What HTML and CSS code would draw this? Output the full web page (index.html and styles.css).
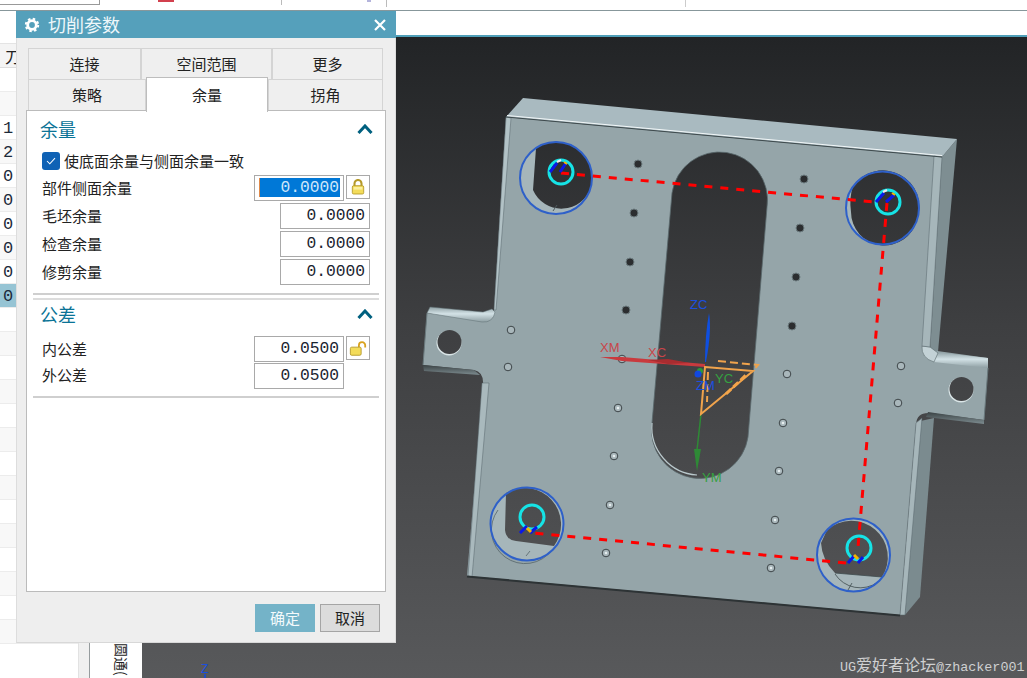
FILE: index.html
```html
<!DOCTYPE html>
<html lang="zh">
<head>
<meta charset="utf-8">
<title>切削参数</title>
<link rel="stylesheet" href="styles.css">
</head>
<body>
<div class="topstrip">
  <div class="topbox"></div>
  <i class="mark mark-a"></i><i class="mark mark-b"></i><i class="mark mark-c"></i><i class="mark mark-d"></i><i class="mark mark-e"></i>
</div>
<div class="workspace">
  <aside class="leftpanel">
    <div class="table">
      <div class="table-gap"></div>
      <div class="table-head">刀具</div>
      <div class="row"></div>
      <div class="row"></div>
      <div class="row">1</div>
      <div class="row">2</div>
      <div class="row">0</div>
      <div class="row">0</div>
      <div class="row">0</div>
      <div class="row">0</div>
      <div class="row">0</div>
      <div class="row selected">0</div>
      <div class="row"></div><div class="row"></div><div class="row"></div><div class="row"></div>
      <div class="row"></div><div class="row"></div><div class="row"></div><div class="row"></div>
      <div class="row"></div><div class="row"></div><div class="row"></div><div class="row"></div>
      <div class="row"></div><div class="row"></div>
    </div>
    <div class="gutter"></div>
    <div class="sidetab"><span class="sidetext">圆通(</span></div>
  </aside>
  <main class="mainarea">
    <div class="whitebar"></div>
    <svg class="viewport" viewBox="142 37 885 641" width="885" height="641" xmlns="http://www.w3.org/2000/svg">
      <defs>
        <linearGradient id="bg" gradientUnits="userSpaceOnUse" x1="0" y1="37" x2="0" y2="678">
          <stop offset="0" stop-color="#222426"/>
          <stop offset="0.45" stop-color="#3e3f41"/>
          <stop offset="1" stop-color="#58595b"/>
        </linearGradient>
        <linearGradient id="band" x1="0" y1="0" x2="0" y2="1">
          <stop offset="0" stop-color="#8fa0a4"/>
          <stop offset="0.45" stop-color="#d3e2e6"/>
          <stop offset="1" stop-color="#8d9ea2"/>
        </linearGradient>
        <linearGradient id="darkband" x1="0" y1="0" x2="0" y2="1">
          <stop offset="0" stop-color="#3a4244"/>
          <stop offset="1" stop-color="#7d8c90"/>
        </linearGradient>
      </defs>
      <rect x="142" y="37" width="885" height="641" fill="url(#bg)"/>

      <polygon points="942,157 957,139 938,352 930,350" fill="#7e8e92"/>
      <polygon points="934,418 920,597 905,615 916,422" fill="#7b8b8f"/>
      <polygon points="506,117 523,98 957,139 942,157" fill="#a9bac0"/>
      <path class="face" d="M506,117 L942,157 L930,350 L988,358 L988,368 L984,420 L930,413 Q917,412 916,424 L900,615 L467,576 L483,385 Q484,372 474,370 L423,365 L427,313 L484,320 Q494,322 494,310 Z"/>

      <path d="M430,307 L483,312 L492,309 L495,312 Q493,323 482,322 L427,313 Z" fill="url(#band)" stroke="#5f6e72" stroke-width=".5"/>
      <polygon points="934,352 988,358 988,368 934,362" fill="url(#band)"/>
      <path d="M922,346 Q921,358 934,362 L938,353 L930,347 Z" fill="#c3d2d6" stroke="#59686c" stroke-width=".6"/>
      <polygon points="423,365 474,370 480,375 424,371" fill="url(#darkband)"/>
      <polygon points="928,412 984,420 984,424 926,417" fill="url(#darkband)"/>

      <polygon points="506,117 511,118 496,310 494,310" fill="#b2c2c6" stroke="#56656a" stroke-width=".5"/>
      <polygon points="934,156 942,157 930,347 922,346" fill="#a6b6ba" stroke="#56656a" stroke-width=".5"/>
      <polygon points="482,383 489,383 472,577 468,576" fill="#a9b9bd" stroke="#56656a" stroke-width=".5"/>
      <polygon points="916,423 922,418 905,615 900,615" fill="#a6b6ba" stroke="#56656a" stroke-width=".5"/>
      <line x1="507" y1="115.500" x2="942" y2="155.500" stroke="#f2f7f8" stroke-width="1"/>
      <line x1="506" y1="117" x2="942" y2="157" stroke="#3f4b4e" stroke-width="1"/>
      <line x1="467" y1="576.500" x2="900" y2="615.500" stroke="#2d3335" stroke-width="2"/>
      <path d="M423,365 L427,313 M988,368 L984,420" stroke="#6a797d" stroke-width="1" fill="none"/>

      <path d="M672,193 A48 48 0 0 1 767,207 L748,437 A48 48 0 0 1 652,423 Z" fill="url(#bg)" stroke="#59686c" stroke-width=".8"/>
      <path d="M652,423 A48 48 0 0 0 697,475" fill="none" stroke="#b9c8cc" stroke-width="1.200"/>

      <circle cx="449" cy="343" r="12.500" fill="#dbe6e8"/>
      <circle cx="449.500" cy="342" r="12" fill="url(#bg)"/>
      <circle cx="961" cy="390" r="12.500" fill="#dbe6e8"/>
      <circle cx="961.500" cy="389" r="12" fill="url(#bg)"/>

      <g fill="#2b2d2f" stroke="#6c7b7f" stroke-width="1">
        <circle cx="638" cy="164" r="4"/><circle cx="804" cy="179" r="4"/>
        <circle cx="634" cy="213" r="4"/><circle cx="800" cy="228" r="4"/>
        <circle cx="630" cy="262" r="4"/><circle cx="796" cy="277" r="4"/>
        <circle cx="626" cy="310" r="4"/><circle cx="792" cy="326" r="4"/>
      </g>
      <g fill="#a9b7bb" stroke="#3d4548" stroke-width="1">
        <circle cx="511" cy="330" r="3.800"/><circle cx="508" cy="367" r="3.800"/>
        <circle cx="622" cy="359" r="3.800"/><circle cx="787" cy="374" r="3.800"/>
        <circle cx="618" cy="408" r="3.800"/><circle cx="783" cy="423" r="3.800"/>
        <circle cx="614" cy="456" r="3.800"/><circle cx="779" cy="471" r="3.800"/>
        <circle cx="610" cy="505" r="3.800"/><circle cx="775" cy="520" r="3.800"/>
        <circle cx="606" cy="553" r="3.800"/><circle cx="771" cy="568" r="3.800"/>
        <circle cx="901" cy="366" r="3.800"/><circle cx="898" cy="403" r="3.800"/>
      </g>
      <g fill="#e6edef">
        <circle cx="618" cy="408" r="1.300"/><circle cx="783" cy="423" r="1.300"/>
        <circle cx="614" cy="456" r="1.300"/><circle cx="779" cy="471" r="1.300"/>
        <circle cx="610" cy="505" r="1.300"/><circle cx="775" cy="520" r="1.300"/>
        <circle cx="606" cy="553" r="1.300"/><circle cx="771" cy="568" r="1.300"/>
      </g>

      <!-- counterbores -->
      <circle cx="556" cy="178" r="36" fill="#a6b6ba"/>
      <path d="M536,148 A36 36 0 0 1 591,187 A31 31 0 0 1 533,190 Z" fill="url(#bg)"/>
      <path d="M553,211 L557,205" stroke="#4d5a5e" stroke-width="1"/>
      <circle class="bore" cx="556" cy="178" r="36"/>

      <circle cx="882.500" cy="208" r="36.500" fill="#a6b6ba"/>
      <path d="M853,186 A36.500 36.500 0 0 1 917,220 A33.500 33.500 0 0 1 851,212 Q849,198 853,186 Z" fill="url(#bg)"/>
      <circle class="bore" cx="882.500" cy="208" r="36.500"/>

      <circle cx="527" cy="524" r="36.500" fill="#a6b6ba"/>
      <path d="M506,493 A36.500 36.500 0 0 1 554,546 L516,541 Q506,540 505,530 Z" fill="url(#bg)"/>
      <path d="M498,510 A32 32 0 0 0 552,550 M526,556 L530,551" fill="none" stroke="#56656a" stroke-width=".8"/>
      <circle class="bore" cx="527" cy="524" r="36.500"/>

      <circle cx="853.500" cy="555" r="36.500" fill="#a6b6ba"/>
      <path d="M827,530 A36.500 36.500 0 0 1 882,577 L835,573 Q822,560 821,543 Z" fill="url(#bg)"/>
      <path d="M835,573 L882,577 M848,590 L852,583 M835,574 A30 30 0 0 0 878,582" fill="none" stroke="#3f4b4e" stroke-width=".8"/>
      <circle class="bore" cx="853.500" cy="555" r="36.500"/>

      <!-- tool path -->
      <path class="toolpath" d="M561,173 L874,202"/>
      <path class="toolpath" d="M887,203 L858,547"/>
      <path class="toolpath" d="M846,563 L534,533"/>

      <circle class="cyan" cx="561" cy="172" r="12"/>
      <circle class="cyan" cx="888" cy="202" r="12"/>
      <circle class="cyan" cx="532" cy="517" r="12"/>
      <circle class="cyan" cx="859" cy="548" r="12"/>

      <path class="tick" d="M550,172 L557,163 M560,172 L566,163"/>
      <path class="tick" d="M876,202 L884,193 M886,202 L894,195"/>
      <path class="tick" d="M520,533 L527,526 M530,533 L537,527"/>
      <path class="tick" d="M848,563 L854,556 M858,563 L863,557"/>
      <path d="M557,162 L561,160 M883,192 L887,190" stroke="#f3e4ef" stroke-width="2"/>
      <path d="M564,162 L567,164 M892,193 L895,195" stroke="#f4b400" stroke-width="2"/>
      <path d="M527,528 L531,532 M854,555 L858,559" stroke="#f4b400" stroke-width="3"/>

      <!-- triad -->
      <polygon points="600,357 622,357 705,364 705,367 622,361" fill="#c93a3e"/>
      <polygon points="648,360 668,359 690,363 668,364" fill="#a82c30"/>
      <path d="M709,313 Q712,330 706,362 L705,362 Q705,335 709,313 Z" fill="#0f4fe0"/>
      <line x1="701" y1="414" x2="697" y2="450" stroke="#2e8a36" stroke-width="1.500"/>
      <polygon points="694,449 701,449 697,471" fill="#2e8a36"/>
      <circle cx="700" cy="371" r="3" fill="#2a9b3a"/>
      <circle cx="698" cy="374" r="3.500" fill="#1248e0"/>
      <polygon class="orange" points="705,367 753,371 701,414"/>
      <path class="orange dashed" d="M718,361 L758,365 L753,371 M708,372 L707,402"/>
      <path d="M726,394 L746,375" stroke="#f3a54a" stroke-width="3" stroke-dasharray="7 3"/>

      <text class="axis red" x="600" y="352">XM</text>
      <text class="axis red" x="648" y="357">XC</text>
      <text class="axis blue" x="690" y="309">ZC</text>
      <text class="axis green" x="715" y="383">YC</text>
      <text class="axis blue" x="696" y="390">ZM</text>
      <text class="axis green" x="702" y="482">YM</text>

      <text class="axis blue small" x="201" y="673">Z</text>
      <line x1="205" y1="674" x2="205" y2="678" stroke="#1248e0" stroke-width="1.500"/>

      <text class="watermark" x="840" y="671">UG<tspan class="cjk">爱好者论坛</tspan>@zhacker001</text>
    </svg>
  </main>
</div>

<section class="dialog">
  <header class="titlebar">
    <svg class="gear" viewBox="0 0 16 16" width="16" height="16" xmlns="http://www.w3.org/2000/svg">
      <circle cx="8" cy="8" r="4.300" fill="none" stroke="#fff" stroke-width="2.800"/>
      <circle cx="8" cy="8" r="6.200" fill="none" stroke="#fff" stroke-width="2" stroke-dasharray="2.500 2.370"/>
    </svg>
    <span class="title">切削参数</span>
    <svg class="close" viewBox="0 0 12 12" width="12" height="12" xmlns="http://www.w3.org/2000/svg">
      <path d="M1 1 L11 11 M11 1 L1 11" stroke="#fff" stroke-width="2.200"/>
    </svg>
  </header>
  <div class="tabs">
    <div class="tabrow tabrow-top">
      <div class="tab tab-a">连接</div>
      <div class="tab tab-b">空间范围</div>
      <div class="tab tab-c">更多</div>
    </div>
    <div class="tabrow tabrow-bottom">
      <div class="tab tab-d">策略</div>
      <div class="tab tab-e active">余量</div>
      <div class="tab tab-f">拐角</div>
    </div>
  </div>
  <div class="panel">
    <div class="section-head first">
      <span>余量</span>
      <svg viewBox="0 0 16 10" width="16" height="10" xmlns="http://www.w3.org/2000/svg"><path d="M1.500 9 L8 2 L14.500 9" fill="none" stroke="#00607f" stroke-width="3"/></svg>
    </div>
    <label class="check">
      <span class="box"><svg viewBox="0 0 12 10" width="10" height="8" xmlns="http://www.w3.org/2000/svg"><path d="M1 5 L4.500 8.500 L11 1.500" fill="none" stroke="#fff" stroke-width="1.300"/></svg></span>
      <span class="checktext">使底面余量与侧面余量一致</span>
    </label>
    <div class="fields">
      <div class="field">
        <span class="flabel">部件侧面余量</span>
        <div class="input focus"><span class="sel">0.0000</span></div>
        <div class="lockbtn">
          <svg viewBox="0 0 16 18" width="14" height="16" xmlns="http://www.w3.org/2000/svg">
            <path d="M4 8 V5 A4 4 0 0 1 12 5 V8" fill="none" stroke="#b59a2a" stroke-width="2.400"/>
            <rect x="1.500" y="7.500" width="13" height="9.500" rx="1.500" fill="#f3dc5a" stroke="#b59a2a"/>
            <rect x="3" y="9" width="10" height="3" fill="#fbf0a0"/>
          </svg>
        </div>
      </div>
      <div class="field"><span class="flabel">毛坯余量</span><div class="input">0.0000</div></div>
      <div class="field"><span class="flabel">检查余量</span><div class="input">0.0000</div></div>
      <div class="field"><span class="flabel">修剪余量</span><div class="input">0.0000</div></div>
    </div>
    <div class="rule rule-a"></div>
    <div class="rule rule-b"></div>
    <div class="section-head">
      <span>公差</span>
      <svg viewBox="0 0 16 10" width="16" height="10" xmlns="http://www.w3.org/2000/svg"><path d="M1.500 9 L8 2 L14.500 9" fill="none" stroke="#00607f" stroke-width="3"/></svg>
    </div>
    <div class="fields fields-tight">
      <div class="field">
        <span class="flabel">内公差</span>
        <div class="input">0.0500</div>
        <div class="lockbtn">
          <svg viewBox="0 0 20 16" width="18" height="15" xmlns="http://www.w3.org/2000/svg">
            <path d="M11 7 V4.500 A3.500 3.500 0 0 1 18 4.500 V7" fill="none" stroke="#d9a21f" stroke-width="2"/>
            <rect x="1.500" y="6.500" width="12" height="9" rx="1.500" fill="#f3dc5a" stroke="#b59a2a"/>
          </svg>
        </div>
      </div>
      <div class="field spaced"><span class="flabel flabel-up">外公差</span><div class="input">0.0500</div></div>
    </div>
    <div class="rule rule-c"></div>
  </div>
  <footer class="footer">
    <button class="btn primary">确定</button>
    <button class="btn">取消</button>
  </footer>
</section>
</body>
</html>
```
FILE: styles.css
```css
* { box-sizing: border-box; }
html, body { margin: 0; padding: 0; }
body {
  width: 1027px;
  height: 678px;
  overflow: hidden;
  position: relative;
  background: #fff;
  font-family: "Noto Sans CJK SC", "Liberation Sans", sans-serif;
  font-size: 15px;
  color: #222;
}

/* top strip */
.topstrip {
  height: 11px;
  border-bottom: 1px solid #87979b;
  position: relative;
  background: #fff;
}
.topbox {
  width: 100px;
  height: 5px;
  border-right: 1px solid #999;
  border-bottom: 1px solid #999;
}
.mark { position: absolute; top: 0; display: block; }
.mark-a { left: 158px; width: 16px; height: 2px; background: #d2404e; }
.mark-b { left: 281px; width: 1px; height: 5px; background: #bbb; }
.mark-c { left: 386px; width: 1px; height: 7px; background: #bbb; }
.mark-d { left: 685px; width: 1px; height: 7px; background: #ccc; }
.mark-e { left: 367px; width: 4px; height: 2px; background: #b4b4dc; }

.workspace { display: flex; height: 667px; }

/* left panel */
.leftpanel { width: 142px; display: flex; flex: none; overflow: hidden; }
.table { width: 78px; flex: none; }
.table-gap { height: 32px; }
.table-head {
  height: 25px;
  padding-left: 5px;
  line-height: 24px;
  background: #f4f4f4;
  border-top: 1px solid #e4e4e4;
  border-bottom: 1px solid #ddd;
  white-space: nowrap;
  font-size: 16px;
}
.row {
  height: 24px;
  padding-left: 3px;
  border-bottom: 1px solid #ececec;
  font-family: "Liberation Mono", monospace;
  font-size: 17px;
  line-height: 26px;
  color: #1c2a3a;
}
.table .row:nth-of-type(odd) { background: #fff; }
.table .row:nth-of-type(even) { background: #f8f8f8; }
.table .row.selected { background: #96c4d4; }
.gutter {
  width: 12px;
  flex: none;
  background: #f0f0f0;
  border-left: 1px solid #e2e2e2;
  border-right: 1px solid #969c9e;
}
.sidetab { flex: 1; background: #fff; padding-top: 632px; padding-left: 25px; }
.sidetext {
  display: block;
  writing-mode: vertical-rl;
  text-orientation: sideways;
  white-space: nowrap;
  font-size: 14px;
  line-height: 14px;
}

/* main area */
.mainarea { flex: 1; display: flex; flex-direction: column; min-width: 0; }
.whitebar {
  height: 26px;
  background: #fff;
  border-bottom: 2px solid #4f9fb8;
  flex: none;
}
.viewport { display: block; flex: none; }
.face { fill: #95a5a9; }
.bore { fill: none; stroke: #2e60c9; stroke-width: 2; }
.toolpath { fill: none; stroke: #f00; stroke-width: 3; stroke-dasharray: 8 8; }
.cyan { fill: none; stroke: #16e3e6; stroke-width: 3; }
.tick { fill: none; stroke: #0a18e8; stroke-width: 3; }
.orange { fill: none; stroke: #f0a34c; stroke-width: 2; }
.dashed { stroke-dasharray: 8 4; }
.axis { font-family: "Liberation Sans", sans-serif; font-size: 13px; }
.axis.small { font-size: 12px; }
.red { fill: #c9454a; }
.blue { fill: #1a4fe0; }
.green { fill: #35a040; }
.watermark {
  font-family: "Liberation Mono", monospace;
  font-size: 13.400px;
  fill: #cfd0d1;
}
.watermark .cjk { font-family: "Noto Sans CJK SC", sans-serif; font-size: 16px; }

/* dialog */
.dialog {
  position: absolute;
  left: 16px;
  top: 11px;
  width: 380px;
  height: 632px;
  background: #eee;
  border-left: 1px solid #ddd;
  border-right: 1px solid #ddd;
  border-bottom: 1px solid #d8d8d8;
  display: flex;
  flex-direction: column;
}
.titlebar {
  height: 27px;
  flex: none;
  margin: 0 -1px;
  background: #55a0bb;
  color: #fff;
  display: flex;
  align-items: center;
  padding: 0 10px 0 8px;
}
.gear { flex: none; }
.title { margin-left: 8px; font-size: 18px; line-height: 27px; flex: 1; color: #eef7fa; }
.close { flex: none; }

.tabs { margin: 10px 11px 0 11px; flex: none; }
.tabrow { display: flex; position: relative; }
.tabrow-top { height: 31px; }
.tabrow-bottom { height: 31px; }
.tab {
  text-align: center;
  background: #efefef;
  border: 1px solid #d4d4d4;
  border-bottom-width: 0;
  font-size: 15px;
  line-height: 29px;
  height: 32px;
}
.tab-a { width: 113px; }
.tab-b { width: 131px; }
.tab-c { width: 111px; }
.tab-d { width: 118px; }
.tab-e { width: 122px; }
.tab-f { width: 115px; }
.tab.active {
  background: #fff;
  border-color: #bdbdbd;
  height: 35px;
  margin-top: -2px;
  line-height: 33px;
  position: relative;
  z-index: 2;
}

.panel {
  margin: 0 9px 0 9px;
  height: 482px;
  flex: none;
  background: #fff;
  border: 1px solid #bbb;
  position: relative;
}
.section-head {
  height: 22px;
  margin: 3px 12px 0 13px;
  display: flex;
  align-items: center;
  justify-content: space-between;
  font-size: 18px;
  line-height: 22px;
  color: #0a7396;
}
.section-head.first { margin-top: 7px; }
.check {
  display: flex;
  align-items: center;
  gap: 4px;
  height: 18px;
  margin: 12px 0 0 15px;
}
.checktext { line-height: 17px; margin-top: -2px; }
.box {
  width: 18px;
  height: 18px;
  border-radius: 3px;
  background: #0f62b5;
  display: flex;
  align-items: center;
  justify-content: center;
}
.fields {
  margin: 5px 15px 0 15px;
  display: flex;
  flex-direction: column;
  gap: 2px;
}
.fields-tight { margin-top: 11px; gap: 1px; }
.field { display: flex; align-items: flex-start; justify-content: flex-end; gap: 2px; height: 26px; }
.flabel { margin-right: auto; line-height: 26px; }
.flabel-up { line-height: 23px; }
.input {
  width: 90px;
  height: 26px;
  border: 1px solid #a9a9a9;
  background: #fff;
  text-align: right;
  padding: 0 4px;
  font-family: "Liberation Mono", monospace;
  font-size: 16.300px;
  line-height: 24px;
  white-space: pre;
  color: #1a2430;
}
.input.focus { padding: 2px 3px 0 4px; }
.sel {
  display: block;
  height: 19px;
  line-height: 19px;
  background: #0078d7;
  color: #cfe6fa;
  padding-right: 1px;
  border-left: 1px solid #e08a4a;
}
.lockbtn {
  width: 24px;
  height: 24px;
  border: 1px solid #a9a9a9;
  background: #fff;
  display: flex;
  align-items: center;
  justify-content: center;
}
.spaced { margin-right: 26px; }
.rule { height: 2px; background: #cfcfcf; margin: 0 6px; }
.rule-a { margin-top: 8px; }
.rule-b { margin-top: 3px; background: #dcdcdc; }
.rule-c { margin-top: 7px; }

.footer {
  display: flex;
  justify-content: flex-end;
  gap: 5px;
  margin: 12px 15px 0 0;
}
.btn {
  width: 60px;
  height: 28px;
  padding: 0;
  border: 1px solid #a5a5a5;
  background: #dcdcdc;
  color: #222;
  font-family: inherit;
  font-size: 15px;
  line-height: 26px;
}
.btn.primary { background: #74b3c8; border-color: #74b3c8; color: #f4fafc; }
```
